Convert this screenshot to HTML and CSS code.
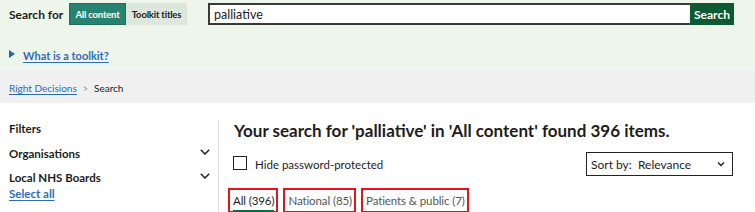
FILE: index.html
```html
<!DOCTYPE html>
<html>
<head>
<meta charset="utf-8">
<link rel="stylesheet" href="styles.css">
</head>
<body>
<header class="top">
  <div class="search-row">
    <span class="search-label">Search for</span>
    <div class="toggle">
      <button class="tog active">All content</button>
      <button class="tog">Toolkit titles</button>
    </div>
    <div class="search-box">
      <input class="search-input" type="text" value="palliative">
      <button class="search-btn">Search</button>
    </div>
  </div>
  <div class="what">
    <span class="tri"></span>
    <a class="link" href="#">What is a toolkit?</a>
  </div>
</header>
<nav class="crumbs">
  <a class="link crumb-link" href="#">Right Decisions</a>
  <span class="sep">&gt;</span>
  <span class="crumb-cur">Search</span>
</nav>
<main class="main">
  <aside class="side">
    <div class="filters">Filters</div>
    <div class="facet">
      <span>Organisations</span>
      <svg class="chev" width="10" height="6" viewBox="0 0 10 6"><polyline points="0.8,0.8 5,5 9.2,0.8" fill="none" stroke="#222" stroke-width="1.5"/></svg>
    </div>
    <div class="facet facet2">
      <span>Local NHS Boards</span>
      <svg class="chev" width="10" height="6" viewBox="0 0 10 6"><polyline points="0.8,0.8 5,5 9.2,0.8" fill="none" stroke="#222" stroke-width="1.5"/></svg>
    </div>
    <a class="link select-all" href="#">Select all</a>
  </aside>
  <section class="results">
    <h1 class="heading">Your search for 'palliative' in 'All content' found 396 items.</h1>
    <div class="opts">
      <label class="hide"><span class="box"></span>Hide password-protected</label>
      <div class="sort">
        <span>Sort by:&nbsp; Relevance</span>
        <svg width="8" height="6" viewBox="0 0 8 6"><polyline points="1,1.5 4,4.5 7,1.5" fill="none" stroke="#222" stroke-width="1.4"/></svg>
      </div>
    </div>
    <div class="tabs">
      <div class="tab tab-active"><span class="tab-text">All (396)</span></div>
      <div class="tab"><span class="tab-text">National (85)</span></div>
      <div class="tab"><span class="tab-text">Patients &amp; public (7)</span></div>
    </div>
  </section>
</main>
</body>
</html>
```
FILE: styles.css
```css
* { box-sizing: border-box; }
html, body { margin: 0; padding: 0; }
body {
  width: 755px;
  height: 212px;
  overflow: hidden;
  font-family: Lato, "Noto Sans", sans-serif;
  color: #1d1d1d;
  background: #fff;
}
.top {
  background: #eef6ec;
  height: 70px;
  padding-top: 3px;
}
.search-row {
  display: flex;
  align-items: center;
  height: 22px;
}
.search-label {
  font-weight: 700;
  font-size: 12px;
  margin-left: 9px;
  width: 60px;
}
.toggle { display: flex; height: 22px; }
.tog {
  border: 0;
  margin: 0;
  font-family: inherit;
  font-size: 9.5px;
  font-weight: 700;
  letter-spacing: -0.2px;
  padding: 0;
  height: 22px;
  white-space: nowrap;
}
.tog.active {
  background: #27826f;
  color: #fff;
  width: 57px;
  border: 1px solid #1f6e5c;
}
.tog:not(.active) {
  background: #dde8dd;
  color: #222;
  width: 61px;
}
.search-box {
  display: flex;
  margin-left: 21px;
  height: 22px;
}
.search-input {
  width: 482px;
  height: 22px;
  border: 2px solid #3a3a3a;
  border-right: 0;
  font-family: inherit;
  font-size: 12.5px;
  padding: 0 4px;
  color: #222;
  outline: none;
}
.search-btn {
  width: 44px;
  height: 22px;
  background: #0b5a32;
  color: #fff;
  border: 0;
  font-family: inherit;
  font-weight: 700;
  font-size: 12px;
  padding: 0;
}
.what {
  display: flex;
  align-items: center;
  margin-top: 22px;
  padding-left: 9px;
  height: 16px;
}
.tri {
  width: 0; height: 0;
  border-top: 4.5px solid transparent;
  border-bottom: 4.5px solid transparent;
  border-left: 6px solid #2866b4;
  margin-right: 8px;
  margin-top: -3px;
}
.link {
  color: #2b6cbc;
  text-decoration: underline;
  text-underline-offset: 2px;
}
.what .link { font-size: 11px; font-weight: 700; }
.crumbs {
  background: #f0f0f0;
  height: 33px;
  display: flex;
  align-items: center;
  padding-left: 9px;
  padding-top: 3px;
  font-size: 10px;
}
.sep { color: #888; margin: 0 6px; font-size: 9px; }
.crumb-cur { color: #222; }
.main {
  display: flex;
  padding-top: 17px;
}
.side {
  width: 219px;
  padding: 0 8px 0 9px;
  border-right: 1px solid #dcdcdc;
  height: 100px;
}
.filters {
  font-weight: 700;
  font-size: 11.5px;
  height: 17px;
  line-height: 17px;
}
.facet {
  display: flex;
  justify-content: space-between;
  align-items: center;
  font-weight: 700;
  font-size: 11.5px;
  margin-top: 8px;
  height: 17px;
}
.facet2 { margin-top: 7px; }
.chev { margin-top: -3px; }
.select-all {
  display: block;
  font-weight: 700;
  font-size: 11.5px;
  margin-top: 1px;
}
.results {
  flex: 1;
  padding-left: 9px;
  padding-right: 22px;
}
.heading {
  margin: 0 0 0 6px;
  font-size: 17px;
  font-weight: 700;
  line-height: 22px;
}
.opts {
  display: flex;
  justify-content: space-between;
  align-items: center;
  margin-top: 10px;
  padding-left: 5px;
}
.hide {
  display: flex;
  align-items: center;
  font-size: 11.5px;
}
.box {
  width: 14px;
  height: 14px;
  border: 1.5px solid #222;
  margin-right: 8px;
  margin-top: -2px;
}
.sort {
  width: 147px;
  height: 24px;
  border: 1px solid #222;
  display: flex;
  align-items: center;
  justify-content: space-between;
  padding: 0 7px 0 4px;
  font-size: 12px;
}
.tabs {
  display: flex;
  gap: 5px;
  margin-top: 12px;
  height: 26px;
  border-bottom: 1px solid #d6d6d6;
}
.tab {
  border: 2px solid #e0161e;
  height: 25px;
  padding: 0 2px 0 3px;
  font-size: 11.5px;
  letter-spacing: -0.1px;
  color: #555;
  display: flex;
  align-items: center;
  white-space: nowrap;
}
.tab-active { color: #1d1d1d; }
.tab-text { line-height: 18px; }
.tab-active .tab-text { border-bottom: 3px solid #17683d; margin-top: 4px; }
```
